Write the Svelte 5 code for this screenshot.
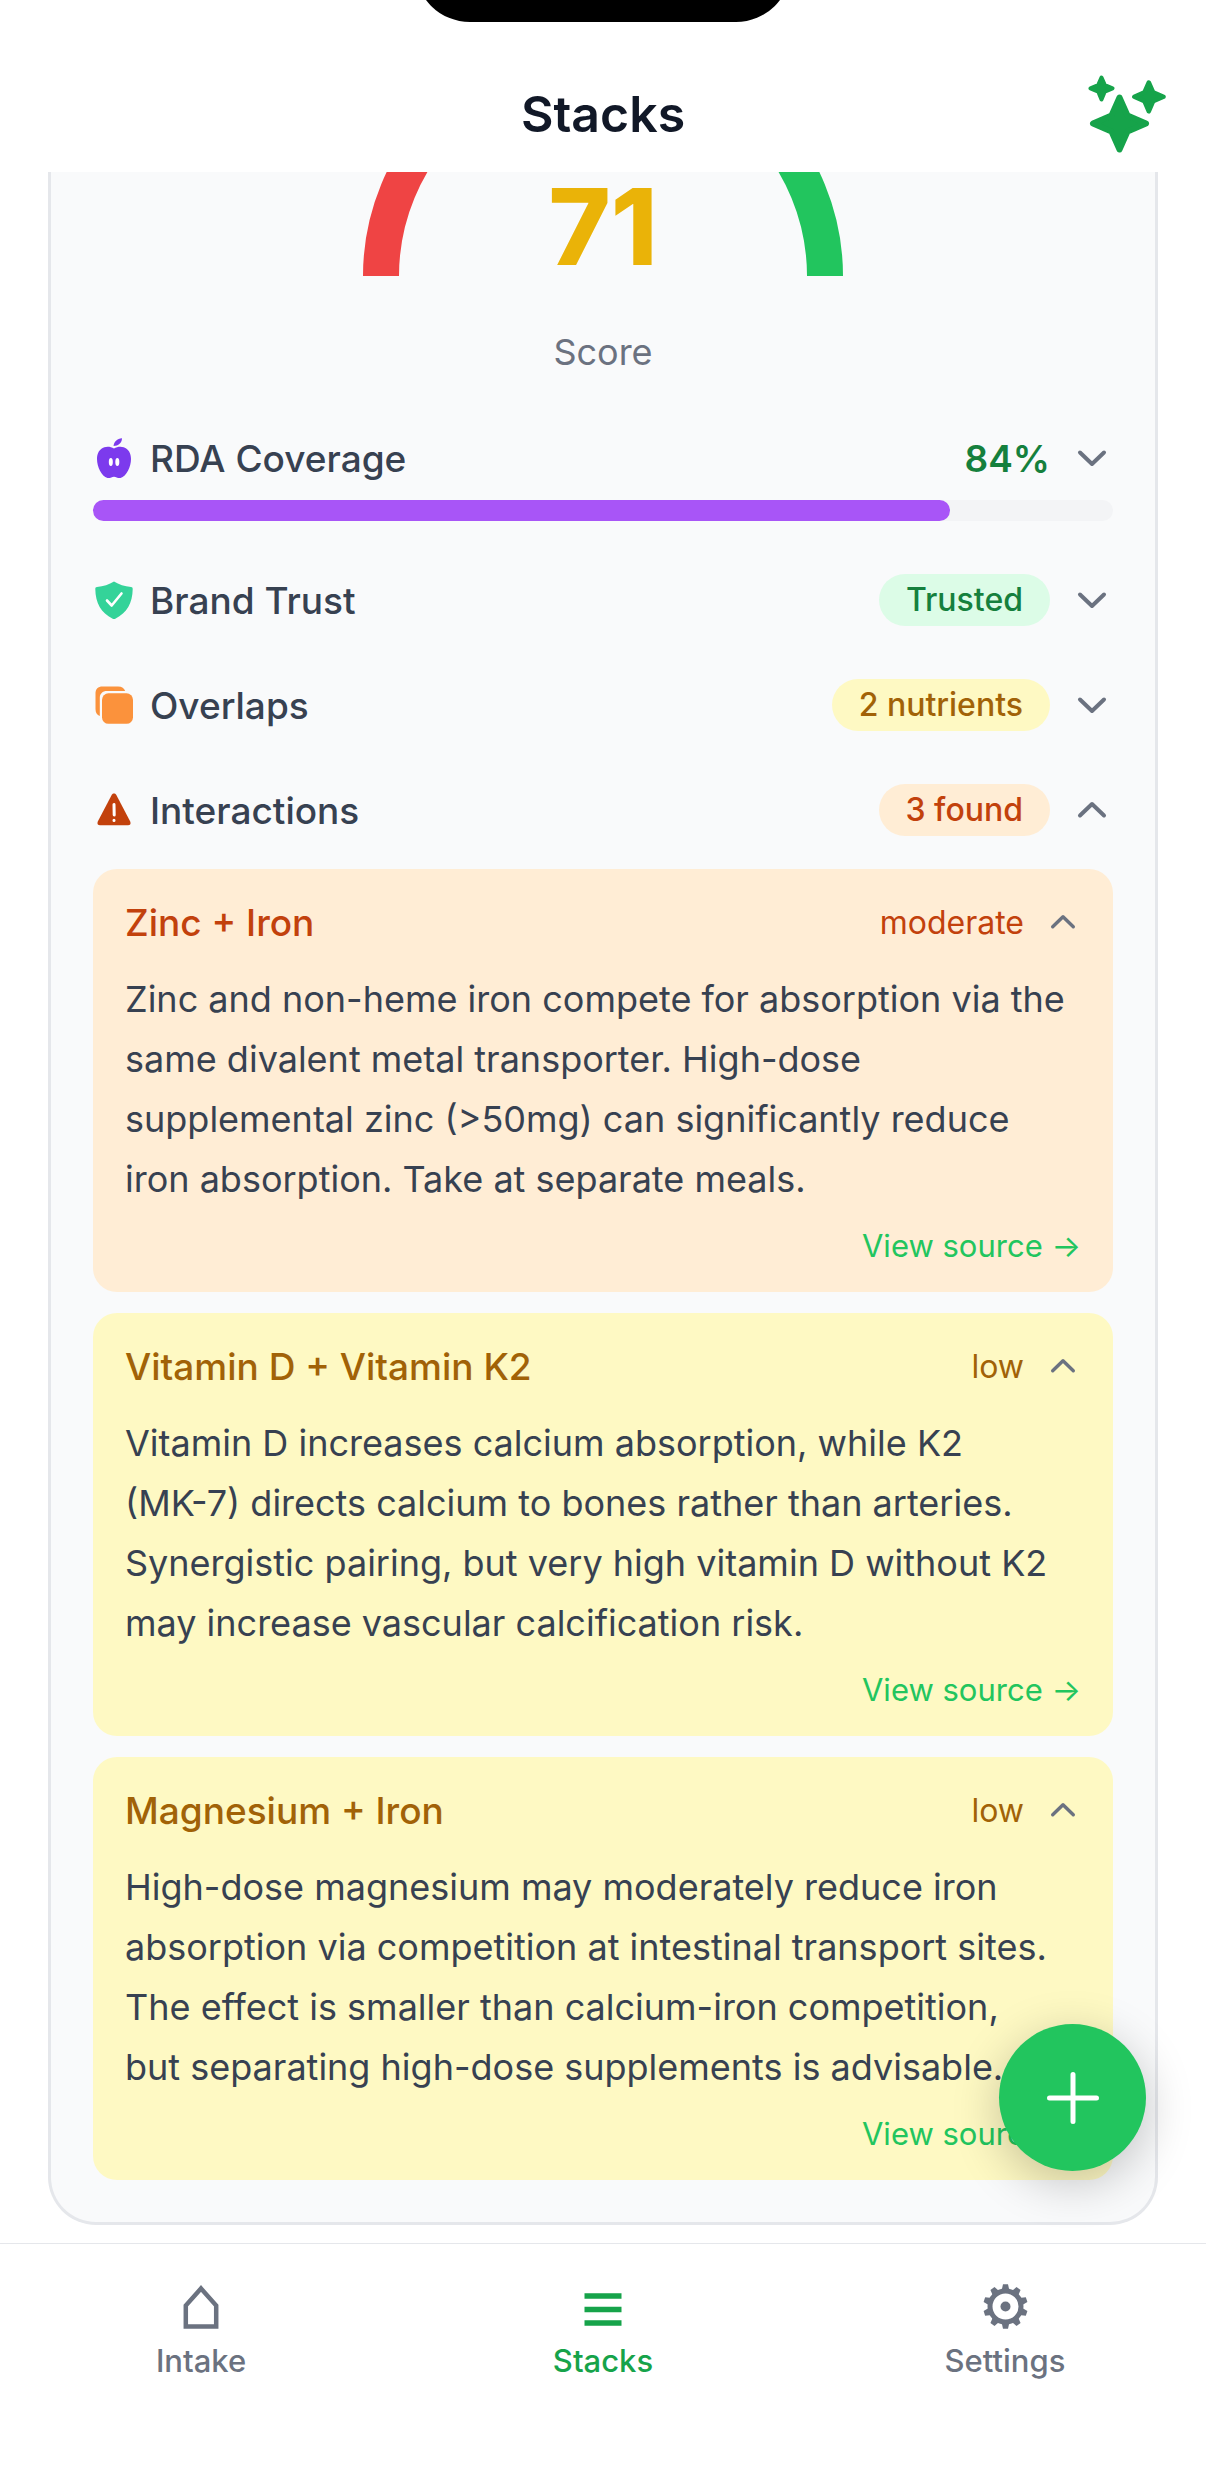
<script lang="ts">
  type Interaction = {
    title: string;
    severity: "moderate" | "low";
    text: string;
  };

  const score = 71;
  const coverage = 84;

  const interactions: Interaction[] = [
    {
      title: "Zinc + Iron",
      severity: "moderate",
      text: "Zinc and non-heme iron compete for absorption via the\nsame divalent metal transporter. High-dose\nsupplemental zinc (>50mg) can significantly reduce\niron absorption. Take at separate meals.",
    },
    {
      title: "Vitamin D + Vitamin K2",
      severity: "low",
      text: "Vitamin D increases calcium absorption, while K2\n(MK-7) directs calcium to bones rather than arteries.\nSynergistic pairing, but very high vitamin D without K2\nmay increase vascular calcification risk.",
    },
    {
      title: "Magnesium + Iron",
      severity: "low",
      text: "High-dose magnesium may moderately reduce iron\nabsorption via competition at intestinal transport sites.\nThe effect is smaller than calcium-iron competition,\nbut separating high-dose supplements is advisable.",
    },
  ];

  // Sections and cards start expanded
  let showInteractions = $state(true);
  let open = $state([true, true, true]);

  // Gear teeth, one every 36 degrees
  const teeth = Array.from({ length: 10 }, (_, i) => i * 36);
</script>

{#snippet chevron(up: boolean, small = false)}
  <svg class="chevron" class:up class:small viewBox="0 0 42 42" aria-hidden="true">
    <path d="M9 15.500l12 11.500 12-11.500" />
  </svg>
{/snippet}

<div class="app">
  <header>
    <svg class="island" viewBox="0 0 376 22" aria-hidden="true">
      <rect y="-88" width="376" height="110" rx="55" />
    </svg>
    <div class="title-bar">
      <h1>Stacks</h1>
      <button class="sparkle" aria-label="Suggestions">
        <svg viewBox="0 0 78 78" fill="currentColor" stroke="currentColor" stroke-linejoin="round">
          <path stroke-width="6" d="M31.500 22.500 L39.500 40.500 L58 48.500 L39.500 56.500 L31.500 74.500 L23.500 56.500 L5 48.500 L23.500 40.500Z" />
          <path stroke-width="4" d="M13.500 2.500 L16.800 10 L24.500 13.300 L16.800 16.600 L13.500 24.500 L10.200 16.600 L2.500 13.300 L10.200 10Z" />
          <path stroke-width="4.500" d="M60.800 7.500 L65.200 17.400 L75.500 21.800 L65.200 26.200 L60.800 36.300 L56.400 26.200 L46.300 21.800 L56.400 17.400Z" />
        </svg>
      </button>
    </div>
  </header>

  <main>
    <section class="panel">
      <div class="gauge">
        <svg viewBox="0 136 480 104" fill="none" stroke-width="36" aria-hidden="true">
          <path stroke="#ef4444" d="M18 240A222 222 0 0 1 83 83" />
          <path stroke="#22c55e" d="M397 83A222 222 0 0 1 462 240" />
        </svg>
        <strong>{score}</strong>
      </div>
      <p class="caption">Score</p>

      <button class="row">
        <svg class="icon" viewBox="0 0 42 42" aria-hidden="true">
          <path fill="#7c3aed" d="M21 11.500C18 9.800 14.500 9.300 11.300 10.300C6.500 11.800 4 16.500 4 22C4 29.500 8.500 39.500 14.500 41C17 41.600 18.800 39.700 21 39.700S25 41.600 27.500 41C33.500 39.500 38 29.500 38 22C38 16.500 35.500 11.800 30.700 10.300C27.500 9.300 24 9.800 21 11.500Z" />
          <path fill="#7c3aed" d="M20.500 9C21 4.500 24 1.800 29 1.200C28.800 5.800 25.500 8.800 20.500 9Z" />
          <ellipse cx="17.800" cy="25" rx="2" ry="4" fill="#fff" />
          <ellipse cx="24.300" cy="25" rx="2" ry="4" fill="#fff" />
        </svg>
        <span class="name">RDA Coverage</span>
        <span class="percent">{coverage}%</span>
        {@render chevron(false)}
      </button>
      <div class="track">
        <div class="fill" style="width: {coverage}%"></div>
      </div>

      <button class="row spaced">
        <svg class="icon" viewBox="0 0 42 42" aria-hidden="true">
          <path fill="#34d399" d="M21 2.500C26 5.500 31.500 7.500 38 8C39.300 8.100 39.700 8.800 39.700 10C39.500 24 34 34 22.300 39.700C21.400 40.200 20.600 40.200 19.700 39.700C8 34 2.500 24 2.300 10C2.300 8.800 2.700 8.100 4 8C10.500 7.500 16 5.500 21 2.500Z" />
          <path fill="none" stroke="#fff" stroke-width="2.600" stroke-linecap="round" stroke-linejoin="round" d="M14 21.500l4.700 5L28.500 14.500" />
        </svg>
        <span class="name">Brand Trust</span>
        <span class="pill green">Trusted</span>
        {@render chevron(false)}
      </button>

      <button class="row spaced">
        <svg class="icon" viewBox="0 0 42 42" aria-hidden="true">
          <path fill="#fb923c" d="M9.500 2.500H25C29 2.500 31.300 4.300 32.200 7H14C9.500 7 6.800 9.700 6.800 14V32C4 31 2.500 28.500 2.500 25V9.500C2.500 5 5 2.500 9.500 2.500Z" />
          <rect x="9" y="9.300" width="31" height="30.500" rx="6.500" fill="#fb923c" />
        </svg>
        <span class="name">Overlaps</span>
        <span class="pill yellow">2 nutrients</span>
        {@render chevron(false)}
      </button>

      <button class="row spaced" onclick={() => (showInteractions = !showInteractions)}>
        <svg class="icon" viewBox="0 0 42 42" aria-hidden="true">
          <path fill="#c2410c" d="M18.800 5.800C19.800 4 22.200 4 23.200 5.800L37.200 32.500C38.200 34.500 37.200 36.300 35 36.300H7C4.800 36.300 3.800 34.500 4.800 32.500Z" />
          <path stroke="#fff" stroke-width="3" stroke-linecap="round" d="M21 15.500l.200 10.500M21 31.300v.100" />
        </svg>
        <span class="name">Interactions</span>
        <span class="pill orange">{interactions.length} found</span>
        {@render chevron(showInteractions)}
      </button>

      {#if showInteractions}
        <div class="cards">
          {#each interactions as item, i}
            <article class={item.severity}>
              <button class="head" onclick={() => (open[i] = !open[i])}>
                <span class="pair">{item.title}</span>
                <span class="severity">{item.severity}</span>
                {@render chevron(open[i], true)}
              </button>
              {#if open[i]}
                <p>{item.text}</p>
                <a href="#source-{i}">View source →</a>
              {/if}
            </article>
          {/each}
        </div>
      {/if}
    </section>
  </main>

  <button class="fab" aria-label="Add">
    <svg viewBox="0 0 52 52"><path d="M26 2.500v47M2.500 26h47" /></svg>
  </button>

  <nav>
    <a href="#intake">
      <svg viewBox="0 0 45 45" fill="none" stroke="currentColor" stroke-width="4.500" aria-hidden="true">
        <path d="M6.800 42.500V21.500L22 4.500 37.200 21.500V42.500Z" />
      </svg>
      Intake
    </a>
    <a href="#stacks" class="active" aria-current="page">
      <svg viewBox="0 0 45 45" stroke="currentColor" stroke-width="5.500" aria-hidden="true">
        <path d="M3.500 12h37M3.500 25.500h37M3.500 39h37" />
      </svg>
      Stacks
    </a>
    <a href="#settings">
      <svg viewBox="0 0 45 45" fill="currentColor" aria-hidden="true">
        {#each teeth as angle}
          <path d="M18.500 7L20 .300h5L26.500 7Z" transform="rotate({angle} 22.500 22.500)" />
        {/each}
        <circle cx="22.500" cy="22.500" r="15.500" fill="none" stroke="currentColor" stroke-width="5" />
        <circle cx="22.500" cy="22.500" r="5" />
      </svg>
      Settings
    </a>
  </nav>
</div>

<style>
  :global(body) {
    background: #fff;
  }

  .app {
    min-height: 100vh;
    display: flex;
    flex-direction: column;
    font-family: Inter, "Liberation Sans", sans-serif;
    font-size: 36px;
    color: #374151;
  }

  button {
    border: none;
    background: none;
    padding: 0;
    font: inherit;
    color: inherit;
    cursor: pointer;
  }

  svg {
    display: block;
  }

  header {
    background: #fff;
  }

  .island {
    width: 376px;
    height: 22px;
    margin: 0 auto;
  }

  .title-bar {
    display: grid;
    grid-template-columns: 1fr auto 1fr;
    align-items: center;
    height: 150px;
    padding: 34px 40px 0;
    box-sizing: border-box;
  }

  h1 {
    grid-column: 2;
    margin: 0;
    font-size: 50px;
    line-height: 60px;
    font-weight: 600;
    color: #111827;
  }

  .sparkle {
    justify-self: end;
    color: #16a34a;
  }

  .sparkle svg {
    width: 78px;
    height: 78px;
  }

  main {
    flex: 1;
    padding: 0 48px 17px;
  }

  .panel {
    padding: 0 42px 42px;
    background: #f9fafb;
    border: 3px solid #e5e7eb;
    border-top: none;
    border-radius: 0 0 48px 48px;
  }

  .gauge {
    display: grid;
    justify-items: center;
    align-items: end;
  }

  .gauge > * {
    grid-area: 1 / 1;
  }

  .gauge svg {
    width: 480px;
    height: 104px;
  }

  .gauge strong {
    font-size: 106px;
    line-height: 98px;
    font-weight: 800;
    color: #eab308;
  }

  .caption {
    margin: 52px 0 56px;
    line-height: 48px;
    text-align: center;
    color: #6b7280;
  }

  .row {
    display: flex;
    align-items: center;
    width: 100%;
    height: 52px;
  }

  .spaced {
    margin-top: 53px;
  }

  .icon {
    width: 42px;
    height: 42px;
    margin-right: 15px;
  }

  .name {
    margin-right: auto;
    font-size: 37px;
    font-weight: 500;
  }

  .percent {
    font-size: 37px;
    font-weight: 600;
    color: #15803d;
  }

  .pill {
    padding: 6px 27px;
    border-radius: 26px;
    font-size: 32px;
    line-height: 40px;
    font-weight: 500;
  }

  .green {
    background: #dcfce7;
    color: #15803d;
  }

  .yellow {
    background: #fef9c3;
    color: #a16207;
  }

  .orange {
    background: #ffedd5;
    color: #c2410c;
  }

  .chevron {
    width: 42px;
    height: 42px;
    margin-left: 21px;
    fill: none;
    stroke: #6b7280;
    stroke-width: 4;
    stroke-linecap: round;
    stroke-linejoin: round;
  }

  .chevron.up {
    transform: scaleY(-1);
  }

  .chevron.small {
    width: 36px;
    height: 36px;
  }

  .track {
    height: 21px;
    margin-top: 16px;
    border-radius: 11px;
    background: #f3f4f6;
  }

  .fill {
    height: 100%;
    border-radius: 11px;
    background: #a855f7;
  }

  .cards {
    display: flex;
    flex-direction: column;
    gap: 21px;
    margin-top: 33px;
  }

  article {
    display: flex;
    flex-direction: column;
    padding: 26px 32px;
    border-radius: 24px;
  }

  .moderate {
    background: #ffedd5;
    color: #c2410c;
  }

  .low {
    background: #fef9c3;
    color: #a16207;
  }

  .head {
    display: flex;
    align-items: center;
    height: 54px;
  }

  .pair {
    margin-right: auto;
    font-size: 37px;
    font-weight: 500;
  }

  .severity {
    font-size: 32px;
  }

  article p {
    margin: 20px 0 17px;
    line-height: 60px;
    white-space: pre-line;
    color: #374151;
  }

  article a {
    align-self: flex-end;
    font-size: 31px;
    line-height: 40px;
    color: #22c55e;
    text-decoration: none;
  }

  .fab {
    position: fixed;
    right: 60px;
    bottom: 321px;
    display: grid;
    place-items: center;
    width: 147px;
    height: 147px;
    border-radius: 50%;
    background: #22c55e;
    box-shadow: 0 12px 48px rgba(0, 0, 0, 0.22);
  }

  .fab svg {
    width: 52px;
    height: 52px;
    fill: none;
    stroke: #fff;
    stroke-width: 5;
    stroke-linecap: round;
  }

  nav {
    display: grid;
    grid-template-columns: repeat(3, 1fr);
    padding: 40px 0 111px;
    border-top: 1px solid #e5e7eb;
    background: #fff;
  }

  nav a {
    display: flex;
    flex-direction: column;
    align-items: center;
    gap: 12px;
    font-size: 31px;
    line-height: 40px;
    font-weight: 500;
    color: #6b7280;
    text-decoration: none;
  }

  nav .active {
    color: #16a34a;
  }

  nav svg {
    width: 45px;
    height: 45px;
  }
</style>
